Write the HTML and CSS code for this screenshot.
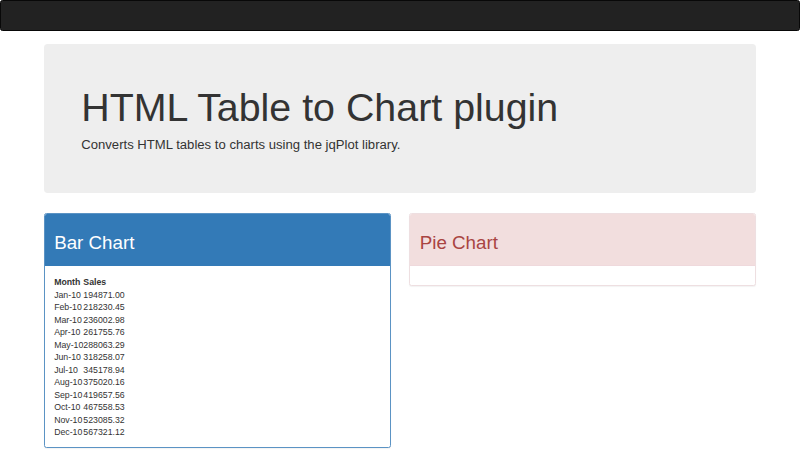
FILE: index.html
```html
<!DOCTYPE html>
<html>
<head>
<meta charset="utf-8">
<title>HTML Table to Chart plugin</title>
<link rel="stylesheet" href="styles.css">
</head>
<body>
<nav class="navbar"></nav>
<div class="container">
  <div class="jumbotron">
    <h1>HTML Table to Chart plugin</h1>
    <p>Converts HTML tables to charts using the jqPlot library.</p>
  </div>
  <div class="row">
    <div class="panel panel-primary">
      <div class="panel-heading"><h2>Bar Chart</h2></div>
      <div class="panel-body">
        <table class="data">
          <thead><tr><th>Month</th><th>Sales</th></tr></thead>
          <tbody>
            <tr><td>Jan-10</td><td>194871.00</td></tr>
            <tr><td>Feb-10</td><td>218230.45</td></tr>
            <tr><td>Mar-10</td><td>236002.98</td></tr>
            <tr><td>Apr-10</td><td>261755.76</td></tr>
            <tr><td>May-10</td><td>288063.29</td></tr>
            <tr><td>Jun-10</td><td>318258.07</td></tr>
            <tr><td>Jul-10</td><td>345178.94</td></tr>
            <tr><td>Aug-10</td><td>375020.16</td></tr>
            <tr><td>Sep-10</td><td>419657.56</td></tr>
            <tr><td>Oct-10</td><td>467558.53</td></tr>
            <tr><td>Nov-10</td><td>523085.32</td></tr>
            <tr><td>Dec-10</td><td>567321.12</td></tr>
          </tbody>
        </table>
      </div>
    </div>
    <div class="panel panel-danger">
      <div class="panel-heading"><h2>Pie Chart</h2></div>
      <div class="panel-body"></div>
    </div>
  </div>
</div>
</body>
</html>
```
FILE: styles.css
```css
* { box-sizing: border-box; }
html, body { margin: 0; padding: 0; }
body {
  font-family: "Liberation Sans", Arial, Helvetica, sans-serif;
  font-size: 8.75px;
  line-height: 1.42857;
  color: #333;
  background: #fff;
}
.navbar {
  display: block;
  height: 31px;
  background: #222;
  border: 1px solid #080808;
  border-radius: 2.5px;
  margin-bottom: 13px;
}
.container {
  width: 731.25px;
  margin: 0 auto;
  padding: 0 9.375px;
}
.jumbotron {
  background: #eee;
  border-radius: 3.75px;
  padding: 29.6px 37.5px;
  margin-bottom: 20px;
}
.jumbotron h1 {
  font-size: 39.375px;
  font-weight: 500;
  line-height: 1.1;
  margin: 12.5px 0 6.25px;
}
.jumbotron p {
  font-size: 13.125px;
  font-weight: 200;
  margin: 0 0 9.375px;
}
.row {
  display: grid;
  grid-template-columns: 1fr 1fr;
  column-gap: 18.75px;
  align-items: start;
}
.panel {
  background: #fff;
  border: 1px solid transparent;
  border-radius: 2.5px;
  box-shadow: 0 1px 1px rgba(0,0,0,.05);
  margin-bottom: 12.5px;
}
.panel-heading {
  padding: 5.7px 9.375px;
  border-bottom: 1px solid transparent;
  border-radius: 1.9px 1.9px 0 0;
}
.panel-heading h2 {
  font-size: 18.75px;
  font-weight: 500;
  line-height: 1.1;
  margin: 12.5px 0 6.25px;
}
.panel-body { padding: 10.2px 9.375px 8.6px; }
.panel-primary { border-color: #5b93c4; }
.panel-primary .panel-heading { background: #337ab7; border-color: #337ab7; color: #fff; }
.panel-danger { border-color: #eedfe1; }
.panel-danger .panel-heading { background: #f2dede; border-color: #efd9dc; color: #a94442; }
.data { border-collapse: collapse; border-spacing: 0; }
.data th { text-align: left; font-weight: bold; padding: 0; }
.data td { padding: 0; }
```
